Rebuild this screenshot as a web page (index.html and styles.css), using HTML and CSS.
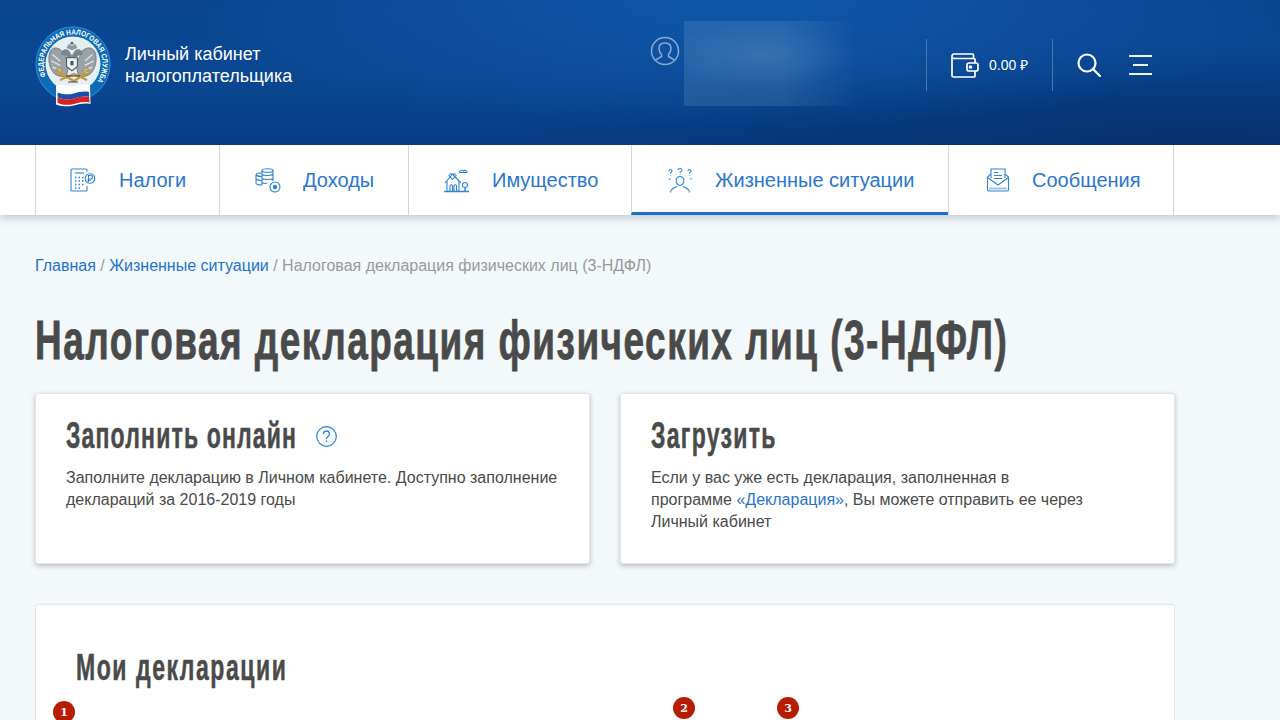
FILE: index.html
```html
<!DOCTYPE html>
<html lang="ru">
<head>
<meta charset="utf-8">
<title>Налоговая декларация физических лиц (3-НДФЛ)</title>
<link rel="stylesheet" href="styles.css">
</head>
<body>
<header class="top">
  <div class="brand">
    <svg class="emblem" width="78" height="82" viewBox="0 0 78 82">
      <defs><path id="ring" d="M13.100 51.100 A29.500 29.500 0 1 1 64.300 55.800"/></defs>
      <circle cx="40" cy="39" r="37.500" fill="#0d6ab4"/>
      <circle cx="40" cy="39" r="37" fill="none" stroke="#2f8ccc" stroke-width="1"/>
      <circle cx="40" cy="39" r="27.500" fill="#e6eff4"/>
      <text class="ring-text"><textPath href="#ring" textLength="123" lengthAdjust="spacingAndGlyphs">ФЕДЕРАЛЬНАЯ НАЛОГОВАЯ СЛУЖБА</textPath></text>
      <g class="eagle">
        <path d="M30 27c-5-5-11-4-12 3-1 6 0 13 5 18 3 2 7 3 11 2l2-10-3-8z" fill="#9aa3a8" stroke="#6e777c" stroke-width=".8"/>
        <path d="M48 27c5-5 12-4 13 3 1 6 0 13-5 18-3 2-7 3-11 2l-2-10 3-8z" fill="#9aa3a8" stroke="#6e777c" stroke-width=".8"/>
        <path d="M21 30l7 6M20 36l8 4M21 42l8 2M25 47l5-1M58 30l-7 6M59 36l-8 4M58 42l-8 2M54 47l-5-1" stroke="#e2e7ea" stroke-width="1.200"/>
        <path d="M29 30c0-4 4-6 7-4l3 5 3-5c3-2 7 0 7 4l-4 1-3 3h-6l-3-3z" fill="#7c858a"/>
        <path d="M34 24l2-4 3 2 3-2 2 4-5 2z" fill="#8f989d"/>
        <circle cx="39" cy="19.500" r="1.500" fill="#6e777c"/>
        <path d="M34 33h10v8l-5 4-5-4z" fill="#f1f4f6" stroke="#4f585d" stroke-width="1"/>
        <path d="M37.500 36h3v4h-3z" fill="#4f585d"/>
      </g>
      <path d="M25 47l16 9 12-8M27 55l14-6 13 6" stroke="#c29a3a" stroke-width="2.400" fill="none"/>
      <circle cx="26" cy="46" r="2.800" fill="none" stroke="#c29a3a" stroke-width="1.600"/>
      <circle cx="53" cy="46" r="2.800" fill="none" stroke="#c29a3a" stroke-width="1.600"/>
      <path d="M33 51h14M35 57h10" stroke="#3b3f40" stroke-width="1.200"/>
      <path d="M23 61c6-3 12 1 18 0s10-3 16-1l.5 19c-6-1-11 0-17 1.500s-12 1-17.500-1z" fill="#fff"/>
      <path d="M24.500 67.500c5 2 11 2.500 16 1s10-2.500 15.500-1.500l.2 5c-5.500-1-10 0-15 1.500s-11 1-16.500-1z" fill="#1a4fb0"/>
      <path d="M24.500 72.500c5 2 11 2.500 16 1s10-2.500 15.700-1.500l.3 5.500c-5.500-1-10 0-15.500 1.500s-11.500 1-16.500-1z" fill="#d5232a"/>
    </svg>
    <div class="brand-name">Личный кабинет<br>налогоплательщика</div>
  </div>
  <div class="user">
    <svg class="user-icon" width="30" height="30" viewBox="0 0 30 30" fill="none" stroke="#8aa9d0" stroke-width="1.500">
      <circle cx="15" cy="15" r="13.500"/>
      <path d="M5.500 24l6-3.500v-2c-1.500-1.500-2.500-3.500-2.500-6 0-3.500 2.500-5.500 6-5.500s6 2 6 5.500c0 2.500-1 4.500-2.500 6v2l6 3.500"/>
    </svg>
    <div class="user-blur"></div>
  </div>
  <div class="wallet">
    <svg width="28" height="25" viewBox="0 0 28 25" fill="none" stroke="#fff" stroke-width="1.700">
      <path d="M1 4.500V22.500a1.500 1.500 0 0 0 1.500 1.500H23a1 1 0 0 0 1-1V18M24 10V6.500a1 1 0 0 0-1-1H3a2 2 0 0 1-2-2.200C1 2 2 1 3 1H21.500a1 1 0 0 1 1 1V5.500"/>
      <rect x="16" y="10" width="11" height="8" rx="2"/>
      <circle cx="19.500" cy="14" r="1" fill="#fff"/>
    </svg>
    <span class="balance">0.00 ₽</span>
  </div>
  <div class="tools">
    <svg width="24" height="24" viewBox="0 0 24 24" fill="none" stroke="#fff" stroke-width="2.200">
      <circle cx="10" cy="10" r="8.500"/>
      <path d="M16 16l7 7" stroke-linecap="round"/>
    </svg>
    <svg width="24" height="20" viewBox="0 0 24 20" fill="none" stroke="#eef3fa" stroke-width="2">
      <path d="M0 1h23M4 10h15M0 19h23"/>
    </svg>
  </div>
</header>

<nav class="nav">
  <a class="nav-item n1">
    <svg width="26" height="24" viewBox="0 0 26 24" fill="none" stroke="#2f83d8" stroke-width="1.100">
      <path d="M17 3.500V2a1 1 0 0 0-1-1H2a1 1 0 0 0-1 1v20a1 1 0 0 0 1 1h14a1 1 0 0 0 1-1v-4"/>
      <path d="M5 5h9"/>
      <path d="M5 9.500h1.500M8.500 9.500h1.500M12 9.500h1.500M5 13h1.500M8.500 13h1.500M12 13h1.500M5 16.500h1.500M8.500 16.500h1.500M12 16.500h1.500M5 20h1.500M8.500 20h1.500" stroke-width="1.500"/>
      <circle cx="20" cy="10.500" r="4.800"/>
      <path d="M18.500 14V7.500h2.200a1.700 1.700 0 0 1 0 3.500h-3.200M17.500 12.500h3"/>
    </svg>
    <span>Налоги</span>
  </a>
  <a class="nav-item n2">
    <svg width="26" height="25" viewBox="0 0 26 25" fill="none" stroke="#2f83d8" stroke-width="1.100">
      <ellipse cx="12.500" cy="2.500" rx="5.500" ry="1.800"/>
      <path d="M7 2.500V17M18 2.500V13M7 6.500c2 1.300 9 1.300 11 0M7 10.500c2 1.300 9 1.300 11 0M7 14.500c1 .6 3 1 5 1"/>
      <path d="M7 5H4C2 5 1 6 1 7v8c0 1 2 2 6 2M1 11c1 1 3 1.500 6 1.500M1 7c1 1 3 1.500 6 1.500"/>
      <circle cx="20" cy="19" r="5"/>
      <circle cx="20" cy="19" r="1.700" fill="#2f83d8"/>
    </svg>
    <span>Доходы</span>
  </a>
  <a class="nav-item n3">
    <svg width="26" height="25" viewBox="0 0 26 25" fill="none" stroke="#2f83d8" stroke-width="1.100">
      <path d="M1 15L8.500 6 17 15M5 6h7M4.500 7l4 4.500 4-4.500"/>
      <path d="M3 13v10M15 13v10"/>
      <path d="M6 23v-5a1.300 1.300 0 0 1 2.600 0v5M10 23v-5a1.300 1.300 0 0 1 2.600 0v5"/>
      <circle cx="21" cy="17" r="2.500"/>
      <path d="M21 19.500V23M0 23.500h25" stroke-width="1.400"/>
      <path d="M15.500 4.500c0-2 2.500-3 4-1.500 1.500-1.500 4 0 3.500 1.500z"/>
    </svg>
    <span>Имущество</span>
  </a>
  <a class="nav-item n4">
    <svg width="26" height="26" viewBox="0 0 26 26" fill="none" stroke="#2f83d8" stroke-width="1.100">
      <path d="M2 4c0-2 3-2 3 0 0 1-1.500 1-1.500 2.500M11 3c0-2 4-2 4 0 0 1.200-2 1.500-2 3M21 4c0-2 3-2 3 0 0 1-1.500 1-1.500 2.500"/>
      <path d="M2.500 11.500v1.500M24 11v1.500M3.500 8v.6M13 7.500v.6M22.500 8v.6" stroke-width="1.300"/>
      <path d="M13 9.500c-2.500 0-3.800 1.700-3.800 4s1.500 5 3.800 5 3.800-2.700 3.800-5-1.300-4-3.800-4z"/>
      <path d="M3.500 25.500c0-3.500 3-4.500 6.500-6M22.500 25.500c0-3.500-3-4.500-6.500-6"/>
    </svg>
    <span>Жизненные ситуации</span>
  </a>
  <a class="nav-item n5">
    <svg width="24" height="24" viewBox="0 0 24 24" fill="none" stroke="#2f83d8" stroke-width="1.100">
      <path d="M5 10V1h14v9"/>
      <path d="M8 4.500h4M8 7.500h8M8 10.500h8" stroke-width="1.200"/>
      <path d="M5 6L1.500 9v12.500A1.500 1.500 0 0 0 3 23h18a1.500 1.500 0 0 0 1.500-1.500V9L19 6"/>
      <path d="M1.500 9.500L12 17l10.500-7.500"/>
      <path d="M3 20.500h18" stroke="#9cc7ef" stroke-width="2"/>
    </svg>
    <span>Сообщения</span>
  </a>
</nav>

<main class="content">
  <div class="crumbs"><a>Главная</a> / <a>Жизненные ситуации</a> / Налоговая декларация физических лиц (3-НДФЛ)</div>
  <h1 class="title"><span class="squeeze s-title">Налоговая декларация физических лиц (3-НДФЛ)</span></h1>
  <div class="cards">
    <section class="card">
      <h2 class="card-title"><span class="squeeze s-online">Заполнить онлайн</span>
        <svg class="help" width="21" height="21" viewBox="0 0 21 21" fill="none" stroke="#2f7fd3" stroke-width="1.200">
          <circle cx="10.500" cy="10.500" r="9.800"/>
          <path d="M7.500 8c0-4 6-4 6 0 0 2.500-3 2.500-3 5" stroke-width="1.300"/>
          <path d="M10.500 14.500v1.500" stroke-width="1.500"/>
        </svg>
      </h2>
      <p class="card-text">Заполните декларацию в Личном кабинете. Доступно заполнение деклараций за 2016-2019 годы</p>
    </section>
    <section class="card">
      <h2 class="card-title"><span class="squeeze">Загрузить</span></h2>
      <p class="card-text narrow">Если у вас уже есть декларация, заполненная в программе <a>«Декларация»</a>, Вы можете отправить ее через Личный кабинет</p>
    </section>
  </div>
  <section class="panel">
    <h2 class="panel-title"><span class="squeeze s-panel">Мои декларации</span></h2>
    <span class="badge b1">1</span>
    <span class="badge b2">2</span>
    <span class="badge b3">3</span>
  </section>
</main>
</body>
</html>
```
FILE: styles.css
```css
* { box-sizing: border-box; }
html, body { margin: 0; padding: 0; height: 720px; overflow: hidden; }
body { font-family: "Liberation Sans", Arial, sans-serif; background: #f3f8fb; color: #4a4a4a; }
a { color: #1f73cf; text-decoration: none; }

.top {
  height: 145px;
  display: flex;
  align-items: flex-start;
  background:
    radial-gradient(ellipse 560px 130px at 740px 0, #0e58aa 0%, rgba(14,88,170,0) 100%),
    radial-gradient(ellipse 700px 100px at 1200px 145px, #06306f 0%, rgba(6,48,111,0) 100%),
    linear-gradient(180deg, #0a4490 0%, #0a4793 50%, #083d85 100%);
  color: #fff;
}
.brand { display: flex; align-items: flex-start; width: 651px; padding: 25px 0 0 33px; }
.emblem { flex: none; }
.eagle { transform-origin: 39.500px 36px; transform: scale(1.080); }
.ring-text { font: bold 7.500px "Liberation Sans", sans-serif; fill: #fff; }
.brand-name { margin: 18px 0 0 14px; font-size: 18px; line-height: 22px; color: #fff; }

.user { display: flex; width: 275px; padding-top: 36px; }
.user-icon { flex: none; margin-left: -1px; }
.user-blur {
  width: 176px; height: 85px; margin: -15px 0 0 4px;
  background:
    radial-gradient(ellipse 100px 32px at 45% 40%, rgba(255,255,255,.09) 0%, rgba(255,255,255,0) 100%),
    linear-gradient(90deg, rgba(255,255,255,.1) 0%, rgba(255,255,255,.1) 55%, rgba(255,255,255,0) 100%);
}

.wallet {
  display: flex; align-items: center;
  width: 127px; height: 52px; margin-top: 39px; padding-left: 24px;
  border-left: 1px solid #4a76ae; border-right: 1px solid #4a76ae;
}
.balance { margin: 0 0 1px 10px; font-size: 14px; color: #fff; }
.tools { display: flex; align-items: center; gap: 28px; margin: 53px 0 0 24px; }

.nav {
  height: 70px; padding-left: 35px;
  display: flex; background: #fff;
  box-shadow: 0 3px 8px rgba(80,90,100,.3);
  position: relative;
}
.nav-item {
  display: flex; align-items: center;
  height: 70px;
  border-left: 1px solid #d6d6d6;
  font-size: 20px; color: #2a76cf;
}
.n1 { width: 184px; padding-left: 34px; gap: 23px; }
.n2 { width: 189px; padding-left: 35px; gap: 22px; }
.n3 { width: 223px; padding-left: 35px; gap: 22px; }
.n4 { width: 317px; padding: 3px 0 0 35px; gap: 22px; border-bottom: 3px solid #1a6fcc; }
.n5 { width: 226px; padding-left: 37px; gap: 22px; border-right: 1px solid #d6d6d6; }

.content { width: 1140px; margin-left: 35px; }
.crumbs { margin-top: 42px; font-size: 16px; line-height: 18px; color: #9a9a9a; }

.squeeze {
  display: inline-block; white-space: nowrap;
  transform-origin: 0 50%; transform: scaleX(.64);
  letter-spacing: 2px; width: 200px;
  -webkit-text-stroke: .5px #4a4a4a;
}
.title {
  margin: 35px 0 0;
  font: bold 56px/60px "Liberation Sans", sans-serif;
  color: #4a4a4a;
}
.s-title { transform: scaleX(.66); letter-spacing: 2.250px; width: 971px; -webkit-text-stroke: .8px #4a4a4a; }
.cards { display: flex; gap: 30px; margin-top: 23px; }
.card {
  width: 555px; height: 171px; padding: 25px 30px 0;
  background: #fff; border: 1px solid #e4e6e8; border-radius: 3px;
  box-shadow: 0 2px 5px rgba(60,60,60,.3);
}
.card-title {
  display: flex; align-items: center;
  margin: 0;
  font: bold 36px/34px "Liberation Sans", sans-serif;
  color: #4a4a4a;
}
.s-online { width: 250px; letter-spacing: 1.800px; }
.help { flex: none; }
.card-text { margin: 14px 0 0; font-size: 16px; line-height: 22px; color: #4a4a4a; }
.narrow { width: 440px; }

.panel {
  position: relative;
  height: 300px; margin-top: 40px; padding: 43px 40px 0;
  background: #fff; border: 1px solid #e4e6e8; border-radius: 3px;
}
.panel-title {
  margin: 0;
  font: bold 36px/40px "Liberation Sans", sans-serif;
  color: #4a4a4a;
}
.s-panel { letter-spacing: 2.400px; }
.badge {
  position: absolute;
  width: 22px; height: 22px; border-radius: 50%;
  background: #b81c00; color: #fff;
  font: bold 11px/23px "DejaVu Serif", serif;
  text-align: center;
}
.b1 { left: 17px; top: 96px; }
.b2 { left: 637px; top: 92px; }
.b3 { left: 741px; top: 92px; }
```
